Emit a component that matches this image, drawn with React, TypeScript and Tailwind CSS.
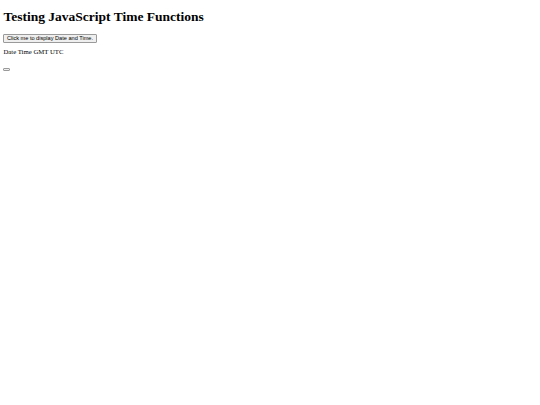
import React from 'react';

const App = () => {
  return (
    <div className="min-h-[405px] bg-white px-[3.4px] pt-[0.1px] leading-none text-black [font-family:'Liberation_Serif','Times_New_Roman',serif]">
      <h1 className="mt-[9px] mb-[9px] text-[13.5px] font-bold leading-[15.5px]">
        Testing JavaScript Time Functions
      </h1>
      <button className="block rounded-[1px] border-[0.8px] border-[#9a9a9a] bg-[#efefef] px-[2.5px] py-[0.4px] text-[5.6px] leading-[6.5px] text-black [font-family:'Liberation_Sans',Arial,sans-serif]">
        Click me to display Date and Time.
      </button>
      <p className="mt-[5.5px] mb-[6.75px] text-[6.75px] leading-[7.8px]">Date Time GMT UTC</p>
      <button className="mt-[12px] block h-[2.5px] w-[7px] rounded-[1px] border-[0.5px] border-[#9a9a9a] bg-[#efefef]" />
    </div>
  );
};

export default App;
